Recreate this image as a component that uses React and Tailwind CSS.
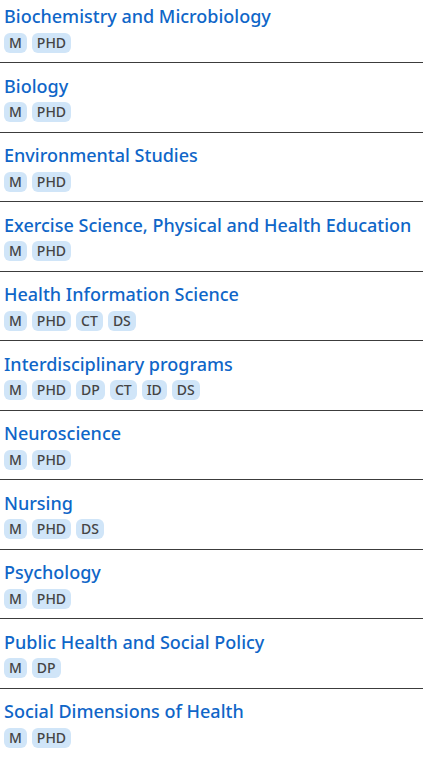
const programs = [
  { name: "Biochemistry and Microbiology", tags: ["M", "PHD"] },
  { name: "Biology", tags: ["M", "PHD"] },
  { name: "Environmental Studies", tags: ["M", "PHD"] },
  { name: "Exercise Science, Physical and Health Education", tags: ["M", "PHD"] },
  { name: "Health Information Science", tags: ["M", "PHD", "CT", "DS"] },
  { name: "Interdisciplinary programs", tags: ["M", "PHD", "DP", "CT", "ID", "DS"] },
  { name: "Neuroscience", tags: ["M", "PHD"] },
  { name: "Nursing", tags: ["M", "PHD", "DS"] },
  { name: "Psychology", tags: ["M", "PHD"] },
  { name: "Public Health and Social Policy", tags: ["M", "DP"] },
  { name: "Social Dimensions of Health", tags: ["M", "PHD"] },
];

const App = () => {
  return (
    <div className="w-[423px] h-[757px] overflow-hidden bg-white font-['Noto_Sans',sans-serif]">
      <ul className="-mt-[6.5px]">
        {programs.map((item, i) => {
          return (
            <li
              key={i}
              className="pt-[9.5px] pb-[9.5px] pl-[4px] border-b border-[#3c3c3c]"
            >
              <a className="block text-[18px] leading-[27px] font-medium text-[#0f66c8] whitespace-nowrap">
                {item.name}
              </a>
              <div className="flex gap-[5px] mt-[2.5px]">
                {item.tags.map((tag) => (
                  <span
                    key={tag}
                    className="h-[20px] px-[5px] rounded-[6px] bg-[#d0e5f8] text-[#444] text-[14px] leading-[20px] font-medium"
                  >
                    {tag}
                  </span>
                ))}
              </div>
            </li>
          );
        })}
      </ul>
    </div>
  );
};

export default App;
